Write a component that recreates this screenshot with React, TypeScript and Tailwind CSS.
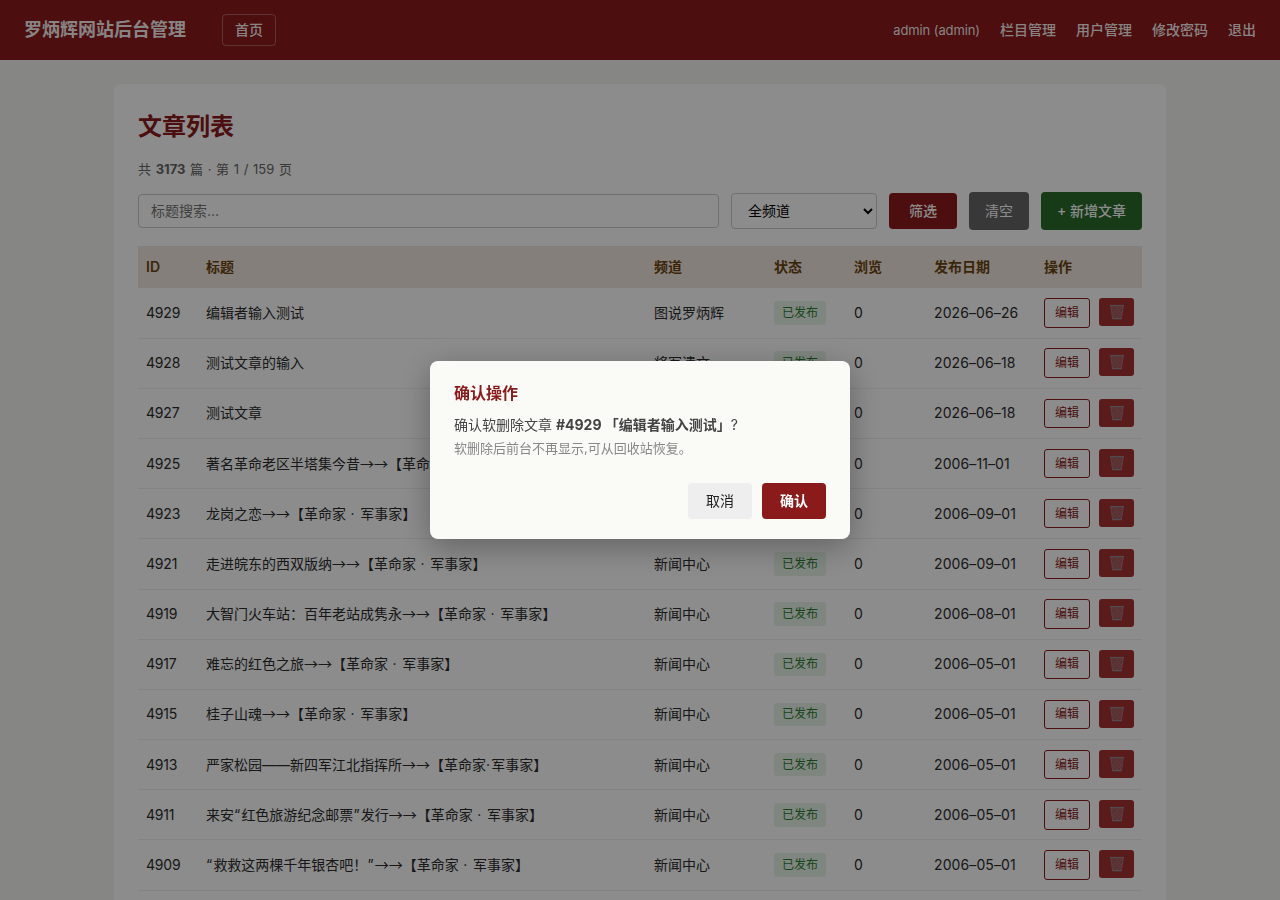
import React, { useState } from "react";

/**
 * Article list of the site admin, with the soft-delete confirmation dialog.
 */

type Article = {
  id: number;
  title: string;
  channel: string;
  date: string;
  views?: number;
};

const ARTICLES: Article[] = [
  { id: 4929, title: "编辑者输入测试", channel: "图说罗炳辉", date: "2026–06–26" },
  { id: 4928, title: "测试文章的输入", channel: "将军遗文", date: "2026–06–18" },
  { id: 4927, title: "测试文章", channel: "将军遗文", date: "2026–06–18" },
  { id: 4925, title: "著名革命老区半塔集今昔→→【革命家 · 军事家】", channel: "新闻中心", date: "2006–11–01" },
  { id: 4923, title: "龙岗之恋→→【革命家 · 军事家】", channel: "新闻中心", date: "2006–09–01" },
  { id: 4921, title: "走进皖东的西双版纳→→【革命家 · 军事家】", channel: "新闻中心", date: "2006–09–01" },
  { id: 4919, title: "大智门火车站：百年老站成隽永→→【革命家 · 军事家】", channel: "新闻中心", date: "2006–08–01" },
  { id: 4917, title: "难忘的红色之旅→→【革命家 · 军事家】", channel: "新闻中心", date: "2006–05–01" },
  { id: 4915, title: "桂子山魂→→【革命家 · 军事家】", channel: "新闻中心", date: "2006–05–01" },
  { id: 4913, title: "严家松园——新四军江北指挥所→→【革命家·军事家】", channel: "新闻中心", date: "2006–05–01" },
  { id: 4911, title: "来安“红色旅游纪念邮票”发行→→【革命家 · 军事家】", channel: "新闻中心", date: "2006–05–01" },
  { id: 4909, title: "“救救这两棵千年银杏吧！”→→【革命家 · 军事家】", channel: "新闻中心", date: "2006–05–01" },
];

const NAV = ["栏目管理", "用户管理", "修改密码", "退出"];
const COLUMNS = ["ID", "标题", "频道", "状态", "浏览", "发布日期", "操作"];
const GRID = "grid grid-cols-[60px_448px_120px_80px_80px_110px_106px] items-center";

export default function App() {
  const [deleting, setDeleting] = useState<Article | null>(ARTICLES[0]);

  return (
    <div className="h-screen overflow-hidden bg-[#f5f5f0] font-[Inter,'Noto_Sans_CJK_SC',sans-serif] text-sm text-[#2c2c2c]">
      <Header />

      <main className="mx-auto mt-6 w-[1052px] rounded-lg bg-white p-6">
        <h1 className="h-9 pt-px text-2xl leading-9 font-bold text-[#8b1a1a]">文章列表</h1>
        <p className="mt-[15px] h-[21px] text-[13px] leading-[21px] text-[#666] [word-spacing:1px]">
          共 <b>3173</b> 篇 · 第 1 / 159 页
        </p>

        <Toolbar />

        <div className={`${GRID} mt-4 h-[42.4px] bg-[#f1e8df] font-semibold text-[#6b4410]`}>
          {COLUMNS.map((c) => (
            <div key={c} className="px-2">{c}</div>
          ))}
        </div>
        {ARTICLES.map((a) => (
          <Row key={a.id} article={a} onDelete={() => setDeleting(a)} />
        ))}
      </main>

      {deleting && <ConfirmDialog article={deleting} onClose={() => setDeleting(null)} />}
    </div>
  );
}

function Header() {
  return (
    <header className="flex h-[60px] items-center bg-[#8b1a1a] px-6 text-white/95">
      <div className="text-lg font-bold">罗炳辉网站后台管理</div>
      <a className="ml-9 flex h-8 items-center rounded border border-white/30 px-3 font-medium">首页</a>
      <nav className="ml-auto flex items-center gap-5 font-medium">
        <span className="text-[13px] font-normal tracking-[-0.1px]">admin (admin)</span>
        {NAV.map((n) => (
          <a key={n}>{n}</a>
        ))}
      </nav>
    </header>
  );
}

function Toolbar() {
  return (
    <div className="mt-3 flex h-[38px] items-center gap-3">
      <input
        className="h-[34px] min-w-0 flex-1 rounded border border-[#ccc] px-3 pb-0.5 placeholder:text-[#757575]"
        placeholder="标题搜索..."
      />
      <select className="h-9 w-[146px] rounded border border-[#ccc] bg-white px-3 pb-0.5 text-black">
        <option>全频道</option>
      </select>
      <button className="h-9 w-[68px] rounded bg-[#8b1a1a] pb-px font-medium text-white">筛选</button>
      <button className="h-[38px] w-[60px] rounded bg-[#666] pb-px text-white">清空</button>
      <button className="h-[38px] w-[101px] rounded bg-[#2a6b2a] pb-px font-medium text-white">+ 新增文章</button>
    </div>
  );
}

// Arrows are set full-width, dots and curly quotes get a little extra air
function Title({ text }: { text: string }) {
  return (
    <>
      {text.split(/(→+|[·“”])/).map((part, i) => {
        if (part.startsWith("→")) return <span key={i} className="font-['Noto_Sans_CJK_SC',sans-serif] leading-none">{part}</span>;
        if (/^[·“”]$/.test(part)) return <span key={i} className="tracking-[1.2px]">{part}</span>;
        return part;
      })}
    </>
  );
}

function Row({ article, onDelete }: { article: Article; onDelete: () => void }) {
  return (
    <div className={`${GRID} h-[50.19px] border-b border-[#eee]`}>
      <div className="px-2 tracking-[-0.2px]">{article.id}</div>
      <div className="h-5 truncate px-2 [word-spacing:0.6px]">
        <Title text={article.title} />
      </div>
      <div className="px-2">{article.channel}</div>
      <div className="px-2">
        <span className="flex h-[23.5px] w-[52px] items-center justify-center rounded-[3px] bg-[#e8f5e9] text-xs text-[#2e7d32]">
          已发布
        </span>
      </div>
      <div className="px-2">{article.views ?? 0}</div>
      <div className="px-2 whitespace-nowrap tracking-[0.1px]">{article.date}</div>
      <div className="flex items-start justify-between px-2">
        <button className="h-[29.4px] w-[46px] rounded-[3px] border border-[#8b1a1a] bg-white text-xs text-[#8b1a1a]">
          编辑
        </button>
        <button
          type="button"
          aria-label="删除"
          onClick={onDelete}
          className="flex h-7 w-[35px] items-center justify-center rounded-[3px] bg-[#a83232]"
        >
          <TrashIcon />
        </button>
      </div>
    </div>
  );
}

function TrashIcon() {
  return (
    <svg width="16" height="16" viewBox="0 0 16 16" fill="none">
      <path d="M1.3 1.5h13.4L12.6 15H3.4L1.3 1.5Z" fill="#a35658" />
      <path d="m3 3 9 10M6 2.5l7 8M2.8 7l7 7.5M13 3 4 13M10 2.5l-7 8M13.2 7l-7 7.5" stroke="#b5777b" strokeWidth=".5" />
      <path d="M1.8 2 3.7 14.5M14.2 2l-1.9 12.5" stroke="#968087" strokeWidth=".9" />
      <path d="M1 1.6h14" stroke="#918b92" strokeWidth="1.3" />
      <path d="M3.3 14.6h9.4" stroke="#918f97" strokeWidth="1.3" />
    </svg>
  );
}

function ConfirmDialog({ article, onClose }: { article: Article; onClose: () => void }) {
  return (
    <div className="fixed inset-0 flex items-center justify-center bg-black/45">
      <div className="h-[178px] w-[420px] rounded-lg bg-[#fafbf7] px-6 py-5 shadow-[0_8px_32px_rgba(0,0,0,0.3)]">
        <h3 className="text-base leading-6 font-bold text-[#8b1a1a]">确认操作</h3>
        <p className="mt-2 leading-6 text-[#444]">
          确认软删除文章 <b>#{article.id} 「{article.title}」</b>?
        </p>
        <p className="text-[13px] leading-[22px] text-[#888]">软删除后前台不再显示,可从回收站恢复。</p>
        <div className="mt-6 flex justify-end gap-2.5">
          <button type="button" onClick={onClose} className="h-9 w-16 rounded bg-[#eee] text-[#222]">
            取消
          </button>
          <button type="button" onClick={onClose} className="h-9 w-16 rounded bg-[#8b1a1a] font-bold text-white">
            确认
          </button>
        </div>
      </div>
    </div>
  );
}
